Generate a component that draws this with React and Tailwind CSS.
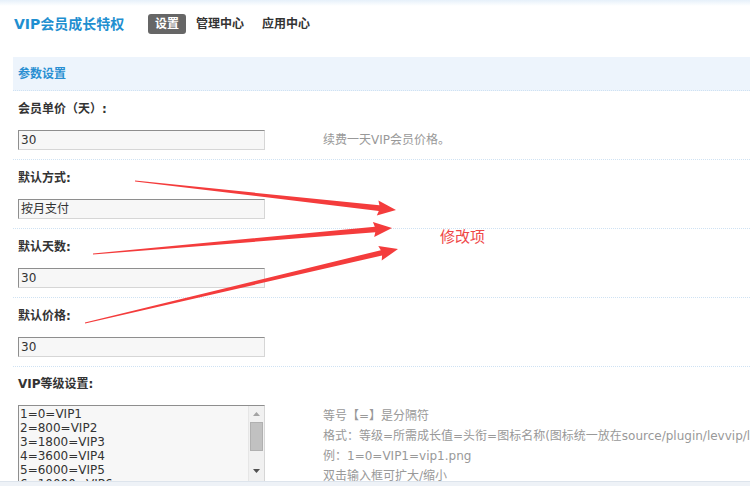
import React from "react";

function arrowPoints(tx, ty, px, py) {
  const dx = px - tx;
  const dy = py - ty;
  const L = Math.hypot(dx, dy);
  const ux = dx / L;
  const uy = dy / L;
  const nx = -uy;
  const ny = ux;
  const hl = 17;
  const hw = 7.5;
  const sw = 2.8;
  const tw = 0.4;
  const bx = px - ux * hl;
  const by = py - uy * hl;
  const pts = [
    [tx + nx * tw, ty + ny * tw],
    [bx + nx * sw, by + ny * sw],
    [bx + nx * hw - ux * 1.5, by + ny * hw - uy * 1.5],
    [px, py],
    [bx - nx * hw - ux * 1.5, by - ny * hw - uy * 1.5],
    [bx - nx * sw, by - ny * sw],
    [tx - nx * tw, ty - ny * tw],
  ];
  return pts.map((p) => p[0].toFixed(1) + "," + p[1].toFixed(1)).join(" ");
}

function Field({ label, value, desc }) {
  return (
    <div className="border-b border-dotted border-[#cfe2f3]">
      <div className="h-[35px] flex items-center pl-[5px] font-bold text-[12px] text-[#333]">
        {label}
      </div>
      <div className="h-[33px] pt-[4px] pl-[5px] flex items-start">
        <div className="w-[247px] shrink-0 h-[20px] bg-[#f7f7f7] border border-t-[#8e8e8e] border-l-[#8e8e8e] border-r-[#d6d6d6] border-b-[#d6d6d6] flex items-center pl-[2px] text-[12px] text-[#333]">
          {value}
        </div>
        {desc && (
          <div className="ml-[58px] h-[20px] flex items-center text-[12px] text-[#999]">
            {desc}
          </div>
        )}
      </div>
    </div>
  );
}

export default function App() {
  const lines = ["1=0=VIP1", "2=800=VIP2", "3=1800=VIP3", "4=3600=VIP4", "5=6000=VIP5", "6=10000=VIP6"];
  return (
    <div className="relative w-[750px] h-[486px] overflow-hidden bg-white flex flex-col font-['DejaVu_Sans','Noto_Sans_CJK_SC',sans-serif]">
      <div className="flex-1 min-h-0 overflow-hidden">
        <div className="h-[6px] bg-gradient-to-b from-[#e6f0fa] to-white" />
        <div className="h-[36px] flex items-center pl-[14px]">
          <div className="w-[134px] text-[14px] font-bold text-[#1f8fd0]">VIP会员成长特权</div>
          <div className="w-[38px] h-[20px] rounded-[3px] bg-[#666] text-white text-[12px] font-bold flex items-center justify-center">
            设置
          </div>
          <div className="ml-[10px] text-[12px] font-bold text-[#333]">管理中心</div>
          <div className="ml-[18px] text-[12px] font-bold text-[#333]">应用中心</div>
        </div>
        <div className="ml-[13px] mt-[15px]">
          <div className="h-[34px] bg-[#edf4fc] border-b border-dotted border-[#cfe2f3] flex items-center pl-[5px] text-[12px] font-bold text-[#2a8fd2]">
            参数设置
          </div>
          <Field label="会员单价（天）:" value="30" desc="续费一天VIP会员价格。" />
          <Field label="默认方式:" value="按月支付" />
          <Field label="默认天数:" value="30" />
          <Field label="默认价格:" value="30" />
          <div>
            <div className="h-[34px] flex items-center pl-[5px] font-bold text-[12px] text-[#333]">
              VIP等级设置:
            </div>
            <div className="pt-[4px] pl-[5px] flex items-start">
              <div className="w-[247px] shrink-0 h-[78px] bg-[#f7f7f7] border border-t-[#8e8e8e] border-l-[#8e8e8e] border-r-[#d6d6d6] border-b-[#d6d6d6] flex overflow-hidden">
                <div className="flex-1 pl-[1px] pt-[1px] text-[12px] leading-[14px] text-[#333] overflow-hidden">
                  {lines.map((l) => (
                    <div key={l}>{l}</div>
                  ))}
                </div>
                <div className="w-[16px] shrink-0 bg-[#f1f1f1] border-l border-[#e6e6e6] flex flex-col items-center">
                  <div className="h-[16px] w-full flex items-center justify-center">
                    <svg width="7" height="4" viewBox="0 0 7 4"><polygon points="3.5,0 7,4 0,4" fill="#a3a3a3" /></svg>
                  </div>
                  <div className="w-[13px] h-[29px] bg-[#c1c1c1] border border-[#b0b0b0]" />
                  <div className="flex-1" />
                  <div className="h-[16px] w-full flex items-center justify-center mb-[3px]">
                    <svg width="7" height="4" viewBox="0 0 7 4"><polygon points="0,0 7,0 3.5,4" fill="#505050" /></svg>
                  </div>
                </div>
              </div>
              <div className="ml-[58px] shrink-0 pt-[1px] text-[12px] leading-[20px] text-[#999] whitespace-nowrap">
                <div>等号【=】是分隔符</div>
                <div>格式：等级=所需成长值=头衔=图标名称(图标统一放在source/plugin/levvip/lv/目录下)</div>
                <div>例：1=0=VIP1=vip1.png</div>
                <div>双击输入框可扩大/缩小</div>
              </div>
            </div>
          </div>
        </div>
      </div>
      <div className="h-[5px] shrink-0 bg-[#eef2f7] border-t border-[#dde4ec]" />

      <svg className="absolute left-0 top-0 pointer-events-none" width="750" height="486" viewBox="0 0 750 486">
        <polygon points={arrowPoints(135, 181, 396, 210)} fill="#f43c3c" />
        <polygon points={arrowPoints(93, 254, 392, 228)} fill="#f43c3c" />
        <polygon points={arrowPoints(85, 323, 398, 249)} fill="#f43c3c" />
      </svg>
      <div className="absolute left-[440px] top-[226px] text-[15px] leading-[20px] text-[#ef4747] font-['Noto_Sans_CJK_SC',sans-serif]">
        修改项
      </div>
    </div>
  );
}
